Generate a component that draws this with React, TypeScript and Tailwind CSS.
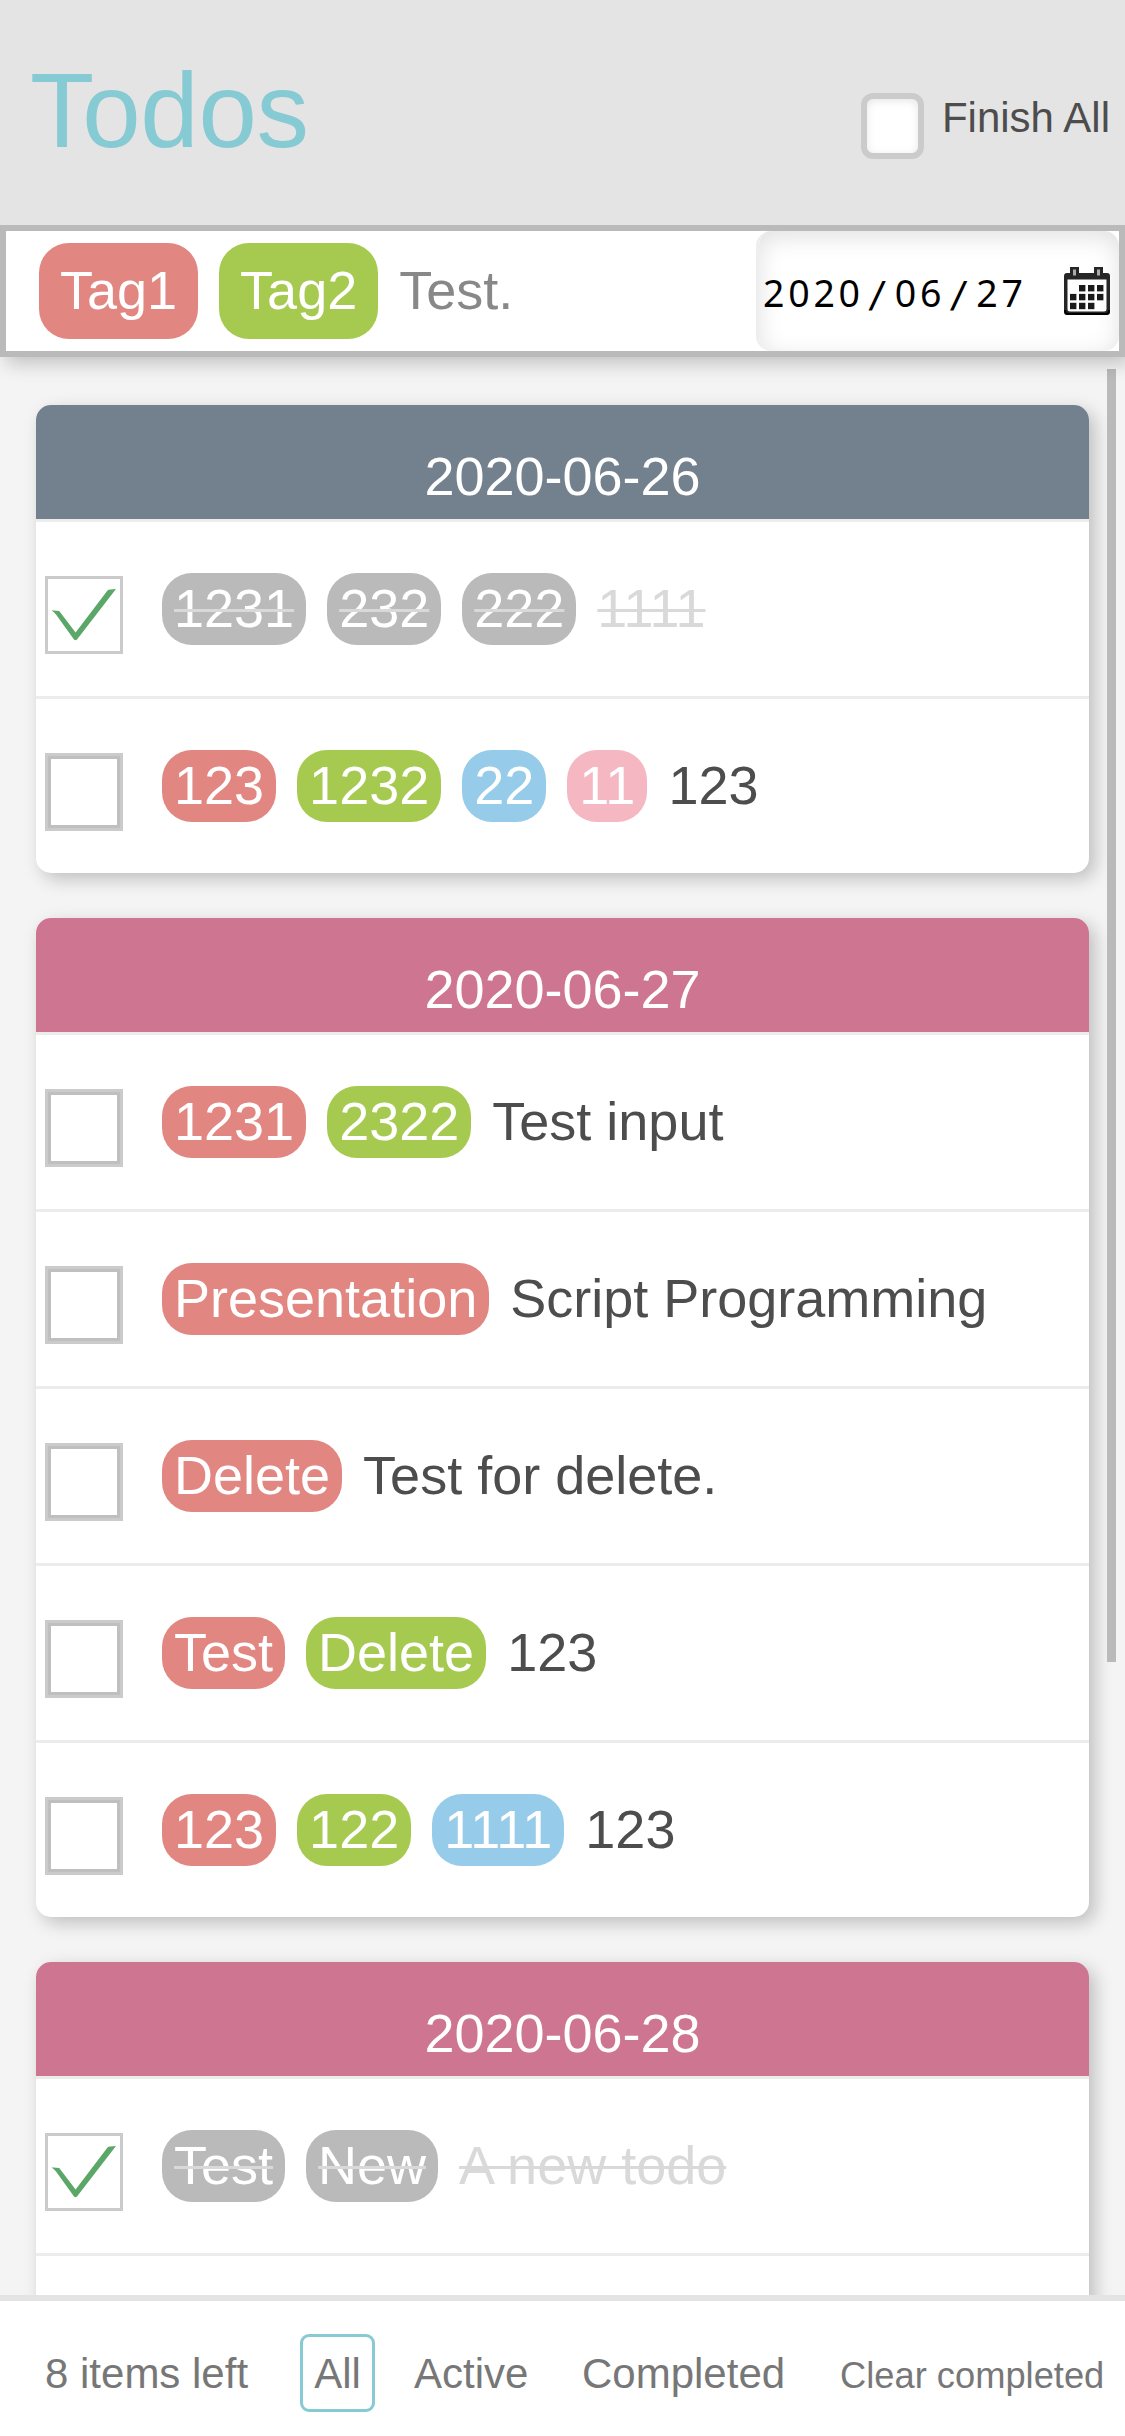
import React from "react";

type Tag = { label: string; color: string };
type Todo = { tags: Tag[]; text: string; done?: boolean };
type Group = { date: string; header: string; todos: Todo[] };

const RED = "bg-[#e18681]";
const GREEN = "bg-[#a6ca50]";
const BLUE = "bg-[#96cce9]";
const PINK = "bg-[#f5b7c1]";

const groups: Group[] = [
  {
    date: "2020-06-26",
    header: "bg-[#73818e]",
    todos: [
      {
        tags: [
          { label: "1231", color: RED },
          { label: "232", color: GREEN },
          { label: "222", color: BLUE },
        ],
        text: "1111",
        done: true,
      },
      {
        tags: [
          { label: "123", color: RED },
          { label: "1232", color: GREEN },
          { label: "22", color: BLUE },
          { label: "11", color: PINK },
        ],
        text: "123",
      },
    ],
  },
  {
    date: "2020-06-27",
    header: "bg-[#ce7591]",
    todos: [
      { tags: [{ label: "1231", color: RED }, { label: "2322", color: GREEN }], text: "Test input" },
      { tags: [{ label: "Presentation", color: RED }], text: "Script Programming" },
      { tags: [{ label: "Delete", color: RED }], text: "Test for delete." },
      { tags: [{ label: "Test", color: RED }, { label: "Delete", color: GREEN }], text: "123" },
      {
        tags: [
          { label: "123", color: RED },
          { label: "122", color: GREEN },
          { label: "1111", color: BLUE },
        ],
        text: "123",
      },
    ],
  },
  {
    date: "2020-06-28",
    header: "bg-[#ce7591]",
    todos: [
      { tags: [{ label: "Test", color: RED }, { label: "New", color: GREEN }], text: "A new todo", done: true },
      { tags: [], text: "" },
    ],
  },
];

function CheckBox({ done }: { done?: boolean }) {
  if (!done) {
    return (
      <div className="mt-[54px] size-[78px] shrink-0 border-[3px] border-[#cbcbcb]">
        <div className="size-full border-[3px] border-[#bfbfbf]" />
      </div>
    );
  }
  return (
    <div className="mt-[54px] size-[78px] shrink-0 border-[3px] border-[#cbcbcb]">
      <svg viewBox="3 3 72 72" className="size-full">
        <path d="M6.5 34.5Q10 34.2 14.2 35L30.6 56.5L62.5 14.5Q64 13 71 13L32 63.5Q30.6 65 29 63.5L11 38.5Q9 36 6.5 34.5Z" fill="#5aa768" />
      </svg>
    </div>
  );
}

function TodoRow({ todo }: { todo: Todo }) {
  return (
    <div className="flex h-[177px] items-start border-t-[3px] border-[#ececec] pl-[9px]">
      <CheckBox done={todo.done} />
      <div className="mt-[51px] ml-[39px] flex gap-[21px] text-[54px] leading-[71px] whitespace-nowrap">
        {todo.tags.map((t) => (
          <span
            key={t.label}
            className={`h-[72px] rounded-[30px] px-3 text-white ${
              todo.done ? "bg-[#bababa] line-through decoration-[#d9d9d9] decoration-[3px]" : t.color
            }`}
          >
            {t.label}
          </span>
        ))}
        <span className={todo.done ? "text-[#d9d9d9] line-through decoration-[3px]" : "text-[#4d4d4d]"}>
          {todo.text}
        </span>
      </div>
    </div>
  );
}

function Slash() {
  return <span className="ml-[3px] w-[28px] font-['DejaVu_Sans_Mono',monospace] text-[36px] tracking-normal">/</span>;
}

function CalendarIcon() {
  const cells = [
    [1, 0], [2, 0], [3, 0],
    [0, 1], [1, 1], [2, 1], [3, 1],
    [0, 2], [1, 2], [2, 2],
  ];
  return (
    <svg viewBox="0 0 46 48" className="h-12 w-[46px]">
      <path
        fillRule="evenodd"
        fill="#262626"
        d="M3 6H6V0H15V6H30V0H39V6H43Q46 6 46 9V45Q46 48 43 48H3Q0 48 0 45V9Q0 6 3 6ZM3.5 12.5V42Q3.5 44.5 6 44.5H40Q42.5 44.5 42.5 42V12.5Z"
      />
      <path d="M9 2.5H12V8.5H9ZM33 2.5H36V8.5H33Z" fill="#aaa" />
      <path d="M1 43Q1 47 4 47H42Q45 47 45 43" fill="none" stroke="#000" strokeWidth="2" />
      {cells.map(([c, r]) => (
        <rect key={`${c}-${r}`} x={6 + c * 9} y={18 + r * 8.9} width={6.4} height={6.4} fill="#1a1a1a" />
      ))}
    </svg>
  );
}

export default function App() {
  return (
    <div className="flex h-[2436px] w-[1125px] flex-col overflow-hidden bg-[#f4f4f4] font-['Liberation_Sans',Arial,sans-serif]">
      <header className="relative z-20 flex h-[225px] shrink-0 items-start justify-between bg-[#e4e4e4] pr-[15px] pl-[30px]">
        <h1 className="mt-[51px] text-[105px] leading-[120px] tracking-[-0.3px] text-[#86cad3]">Todos</h1>
        <div className="mt-[93px] flex gap-[18px]">
          <div className="h-[66px] w-[63px] rounded-[12px] border-[6px] border-[#cbcbcb] bg-white shadow-[inset_0_2px_8px_#0000001a]" />
          <span className="pt-px text-[42px] leading-[48px] text-[#4d4d4d]">Finish All</span>
        </div>
      </header>

      <div className="relative z-10 flex h-[132px] shrink-0 items-center border-[6px] border-[#bababa] bg-white pl-[33px] text-[54px] leading-[95px] shadow-[6px_6px_18px_#00000038]">
        <div className="flex flex-1 gap-[21px]">
          <span className="h-24 rounded-[30px] bg-[#e18681] px-[21px] text-white">Tag1</span>
          <span className="h-24 rounded-[30px] bg-[#a6ca50] px-[21px] text-white">Tag2</span>
          <span className="text-[#888]">Test.</span>
        </div>
        <div className="flex h-full w-[363px] items-center justify-between rounded-[15px] border-l-[3px] border-[#eee] pr-[9px] pl-1 shadow-[inset_0_6px_24px_#0000001f]">
          <div className="flex items-baseline pt-[5px] font-['Noto_Sans',sans-serif] text-[37.5px] leading-[50px] tracking-[3.75px] text-black">
            <span>2020</span>
            <Slash />
            <span>06</span>
            <Slash />
            <span>27</span>
          </div>
          <CalendarIcon />
        </div>
      </div>

      <main className="relative flex min-h-0 flex-1 flex-col gap-[45px] overflow-hidden px-9 pt-12">
        {groups.map((g) => (
          <section
            key={g.date}
            className="shrink-0 overflow-hidden rounded-[15px] bg-white shadow-[6px_6px_18px_#00000038]"
          >
            <h2 className={`h-[114px] pt-[41px] text-center text-[54px] leading-[60px] text-white ${g.header}`}>
              {g.date}
            </h2>
            {g.todos.map((t, i) => (
              <TodoRow key={i} todo={t} />
            ))}
          </section>
        ))}
        <div className="absolute top-3 right-[9px] h-[1293px] w-[9px] bg-[#bababa]" />
      </main>

      <footer className="flex h-[141px] shrink-0 items-start border-t-[6px] border-[#e4e4e4] bg-white pt-[33px] pl-[45px] text-[42px] leading-[74px] whitespace-nowrap text-[#777]">
        <span className="w-[255px] pt-[3px]">8 items left</span>
        <span className="h-[78px] w-[75px] rounded-[9px] border-[3px] border-[#86cad3] text-center">All</span>
        <span className="w-[168px] pt-[3px] pl-[39px]">Active</span>
        <span className="w-[258px] pt-[3px] pl-[39px]">Completed</span>
        <span className="pt-[5px] pl-[39px] text-[36.3px]">Clear completed</span>
      </footer>
    </div>
  );
}
